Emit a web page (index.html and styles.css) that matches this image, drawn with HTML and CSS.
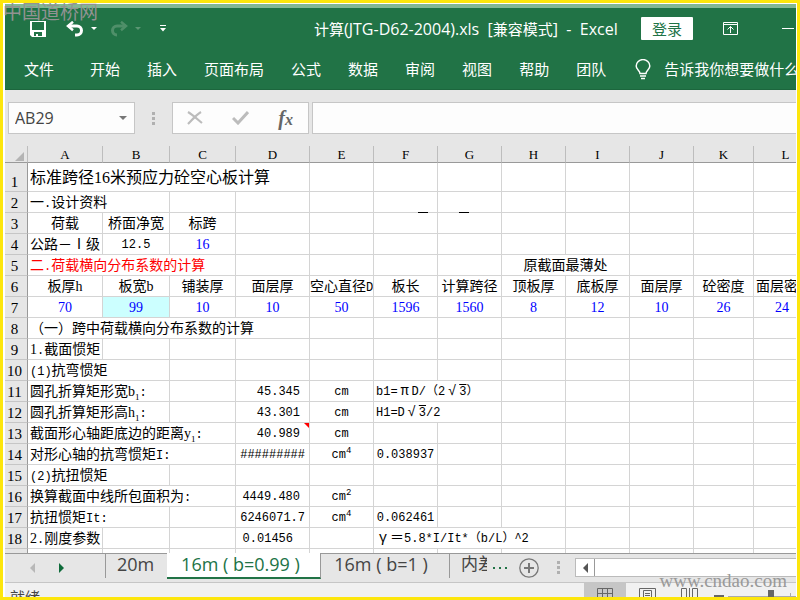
FILE: index.html
```html
<!DOCTYPE html>
<html lang="zh-CN">
<head>
<meta charset="utf-8">
<title>计算(JTG-D62-2004).xls - Excel</title>
<link rel="stylesheet" href="styles.css">
</head>
<body>
<div class="frame">
<div class="window">
  <header class="ribbon">
    <div class="titlebar">
      <div class="quick">
        <button class="icon-btn" aria-label="保存"><svg width="16" height="16" viewBox="0 0 16 16"><path fill="#fff" fill-rule="evenodd" d="M0 0h16v16H2l-2-2zM2 1v8h12V1zM4 11v4h2v-2h2v2h4v-4z"/></svg></button>
        <button class="icon-btn undo" aria-label="撤消"><svg width="18" height="16" viewBox="0 0 18 16"><path fill="none" stroke="#fff" stroke-width="3" d="M2.500 5H11a4.500 4.500 0 0 1 0 9H9"/><path fill="none" stroke="#fff" stroke-width="2.500" d="M7 .8 2 5l5 4.200"/></svg></button>
        <button class="icon-btn caret" aria-label="撤消列表"><svg width="6" height="3" viewBox="0 0 6 3"><path fill="#fff" d="M0 0h6L3 3z"/></svg></button>
        <button class="icon-btn redo" aria-label="恢复"><svg width="18" height="16" viewBox="0 0 18 16"><path fill="none" stroke="#4f8f69" stroke-width="3" d="M15.500 5H7a4.500 4.500 0 0 0 0 9"/><path fill="none" stroke="#4f8f69" stroke-width="2.500" d="m11 .8 5 4.200-5 4.200"/></svg></button>
        <button class="icon-btn caret" aria-label="恢复列表"><svg width="6" height="3" viewBox="0 0 6 3"><path fill="#5b9673" d="M0 0h6L3 3z"/></svg></button>
        <button class="icon-btn custom" aria-label="自定义快速访问工具栏"><svg width="6" height="7" viewBox="0 0 6 7"><path fill="#fff" d="M0 0h6v1H0zM0 3h6L3 6.500z"/></svg></button>
      </div>
      <h1 class="title"><span>计算</span>(JTG-D62-2004).xls&nbsp; [<span>兼容模式</span>]&nbsp; -&nbsp; Excel</h1>
      <button class="login">登录</button>
      <button class="icon-btn display" aria-label="功能区显示选项"><svg width="15" height="13" viewBox="0 0 15 13"><path fill="none" stroke="#fff" d="M.5 .5h14v12H.5zM0 2.500h15M7.500 11V4.500M4.500 7.500l3-3 3 3"/></svg></button>
      <button class="icon-btn minimize" aria-label="最小化"><svg width="12" height="12" viewBox="0 0 12 12"><path fill="#fff" d="M0 5h12v1H0z"/></svg></button>
    </div>
    <nav class="menu">
      <a href="#" class="file">文件</a><a href="#">开始</a><a href="#">插入</a><a href="#">页面布局</a><a href="#">公式</a><a href="#">数据</a><a href="#">审阅</a><a href="#">视图</a><a href="#">帮助</a><a href="#">团队</a>
      <a href="#" class="tell"><svg width="16" height="21" viewBox="0 0 16 21"><path fill="none" stroke="#fff" stroke-width="1.500" d="M5 14.500c0-3-3.800-3.500-3.800-7.500a6.700 6.300 0 0 1 13.600 0c0 4-3.800 4.500-3.800 7.500zM5 17h6M6 19.500h4"/></svg>告诉我你想要做什么</a>
    </nav>
  </header>

  <div class="formula-row">
    <div class="box name-box"><input aria-label="名称框" value="AB29"><svg width="8" height="4" viewBox="0 0 8 4"><path fill="#777" d="M0 0h8L4 4z"/></svg></div>
    <span class="dots"><i></i><i></i><i></i></span>
    <div class="box actions">
      <button class="icon-btn" aria-label="取消"><svg width="16" height="14" viewBox="0 0 16 14"><path fill="none" stroke="#bcbcbc" stroke-width="2.200" d="M1 1c5 3 9 7 14 11M14 1C9 4 6 8 1 13"/></svg></button>
      <button class="icon-btn" aria-label="输入"><svg width="17" height="14" viewBox="0 0 17 14"><path fill="none" stroke="#bcbcbc" stroke-width="3" d="M1 7l5 5L16 1"/></svg></button>
      <button class="icon-btn fx" aria-label="插入函数">f<small>x</small></button>
    </div>
    <div class="box formula"><input aria-label="编辑栏"></div>
  </div>

  <main class="sheet">
    <table>
      <colgroup><col class="c-head"><col class="c-a"><col class="c-b"><col class="c-c"><col class="c-d"><col class="c-std" span="6"><col class="c-k"><col class="c-std"></colgroup>
      <thead><tr><th class="corner"><svg width="9" height="9" viewBox="0 0 9 9"><path fill="#b4b4b4" d="M9 0v9H0z"/></svg></th><th>A</th><th>B</th><th>C</th><th>D</th><th>E</th><th>F</th><th>G</th><th>H</th><th>I</th><th>J</th><th>K</th><th>L</th></tr></thead>
      <tbody>
      <tr class="tall"><th>1</th><td class="l" colspan="4">标准跨径16米预应力砼空心板计算</td><td></td><td></td><td></td><td></td><td></td><td></td><td></td><td></td></tr>
      <tr><th>2</th><td class="l" colspan="2">一<span class="num">.</span>设计资料</td><td></td><td></td><td></td><td class="bar bar-f"></td><td class="bar bar-g"></td><td></td><td></td><td></td><td></td><td></td></tr>
      <tr><th>3</th><td>荷载</td><td>桥面净宽</td><td>标跨</td><td></td><td></td><td></td><td></td><td></td><td></td><td></td><td></td><td></td></tr>
      <tr><th>4</th><td class="l">公路－Ⅰ级</td><td class="num">12.5</td><td class="blue">16</td><td></td><td></td><td></td><td></td><td></td><td></td><td></td><td></td><td></td></tr>
      <tr><th>5</th><td class="l red" colspan="3">二<span class="num">.</span>荷载横向分布系数的计算</td><td></td><td></td><td></td><td></td><td colspan="2">原截面最薄处</td><td></td><td></td><td></td></tr>
      <tr><th>6</th><td>板厚h</td><td>板宽b</td><td>铺装厚</td><td>面层厚</td><td>空心直径<span class="num">D</span></td><td>板长</td><td>计算跨径</td><td>顶板厚</td><td>底板厚</td><td>面层厚</td><td>砼密度</td><td class="l">面层密度</td></tr>
      <tr class="blue"><th>7</th><td>70</td><td class="cyan">99</td><td>10</td><td>10</td><td>50</td><td>1596</td><td>1560</td><td>8</td><td>12</td><td>10</td><td>26</td><td class="last">24</td></tr>
      <tr><th>8</th><td class="l" colspan="4">（一）跨中荷载横向分布系数的计算</td><td></td><td></td><td></td><td></td><td></td><td></td><td></td><td></td></tr>
      <tr><th>9</th><td class="l">1<span class="num">.</span>截面惯矩</td><td></td><td></td><td></td><td></td><td></td><td></td><td></td><td></td><td></td><td></td><td></td></tr>
      <tr><th>10</th><td class="l" colspan="2"><span class="num">(1)</span>抗弯惯矩</td><td></td><td></td><td></td><td></td><td></td><td></td><td></td><td></td><td></td><td></td></tr>
      <tr><th>11</th><td class="l" colspan="2">圆孔折算矩形宽b<sub>1</sub><span class="num">:</span></td><td></td><td class="r num">45.345</td><td class="num">cm</td><td class="l num" colspan="2">b1=<span class="full-width">π</span>D/（2<span class="full-width">√</span><span class="root">3</span>）</td><td></td><td></td><td></td><td></td><td></td></tr>
      <tr><th>12</th><td class="l" colspan="2">圆孔折算矩形高h<sub>1</sub><span class="num">:</span></td><td></td><td class="r num">43.301</td><td class="num">cm</td><td class="l num" colspan="2">H1=D<span class="full-width">√</span><span class="root">3</span>/2</td><td></td><td></td><td></td><td></td><td></td></tr>
      <tr><th>13</th><td class="l" colspan="3">截面形心轴距底边的距离y<sub>1</sub><span class="num">:</span></td><td class="r num note">40.989</td><td class="num">cm</td><td></td><td></td><td></td><td></td><td></td><td></td><td></td></tr>
      <tr><th>14</th><td class="l" colspan="3">对形心轴的抗弯惯矩<span class="num">I:</span></td><td class="r full num">#########</td><td class="num">cm<sup>4</sup></td><td class="num">0.038937</td><td></td><td></td><td></td><td></td><td></td><td></td></tr>
      <tr><th>15</th><td class="l" colspan="2"><span class="num">(2)</span>抗扭惯矩</td><td></td><td></td><td></td><td></td><td></td><td></td><td></td><td></td><td></td><td></td></tr>
      <tr><th>16</th><td class="l" colspan="3">换算截面中线所包面积为<span class="num">:</span></td><td class="r num">4449.480</td><td class="num">cm<sup>2</sup></td><td></td><td></td><td></td><td></td><td></td><td></td><td></td></tr>
      <tr><th>17</th><td class="l" colspan="2">抗扭惯矩<span class="num">It:</span></td><td></td><td class="r full num">6246071.7</td><td class="num">cm<sup>4</sup></td><td class="num">0.062461</td><td></td><td></td><td></td><td></td><td></td><td></td></tr>
      <tr><th>18</th><td class="l">2<span class="num">.</span>刚度参数</td><td></td><td></td><td class="r wide num">0.01456</td><td></td><td class="l num" colspan="3"><span class="full-width">γ</span><span class="full-width">＝</span>5.8*I/It*（b/L）^2</td><td></td><td></td><td></td><td></td></tr>
      <tr><th></th><td></td><td></td><td></td><td></td><td></td><td></td><td></td><td></td><td></td><td></td><td></td><td></td></tr>
      </tbody>
    </table>
  </main>

  <div class="tabs">
    <div class="tab-nav">
      <button class="icon-btn" aria-label="上一张"><svg width="5" height="10" viewBox="0 0 5 10"><path fill="#b8b8b8" d="M5 0v10L0 5z"/></svg></button>
      <button class="icon-btn" aria-label="下一张"><svg width="5" height="10" viewBox="0 0 5 10"><path fill="#0e6b3a" d="M0 0v10l5-5z"/></svg></button>
    </div>
    <button class="tab first">20m</button>
    <button class="tab active">16m ( b=0.99 )</button>
    <button class="tab third">16m ( b=1 )</button>
    <button class="tab cut"><span>内差</span></button>
    <button class="more" aria-label="更多工作表"><i></i><i></i><i></i></button>
    <button class="icon-btn add" aria-label="新工作表"><svg width="20" height="20" viewBox="0 0 20 20"><circle cx="10" cy="10" r="9.200" fill="none" stroke="#777" stroke-width="1.300"/><path stroke="#777" stroke-width="2" d="M5 10h10M10 5v10"/></svg></button>
    <span class="dots"><i></i><i></i><i></i></span>
    <div class="scroll"><button class="icon-btn" aria-label="向左滚动"><svg width="5" height="10" viewBox="0 0 5 10"><path fill="#555" d="M5 0v10L0 5z"/></svg></button></div>
  </div>

  <footer class="status">
    <span class="ready">就绪</span>
    <button class="view on" aria-label="普通"><svg width="16" height="16" viewBox="0 0 16 16"><path fill="none" stroke="#666" d="M.5 .5h15v15H.5zM0 5.500h16M0 10.500h16M5.500 0v16M10.500 0v16"/></svg></button>
    <button class="view" aria-label="页面布局"><svg width="17" height="16" viewBox="0 0 17 16"><path fill="none" stroke="#666" d="M.5 .5h16v15H.5zM4.500 15V2.500h8V15M6 5.500h5M6 7.500h5M6 9.500h5"/></svg></button>
    <button class="view" aria-label="分页预览"><svg width="17" height="16" viewBox="0 0 17 16"><path fill="none" stroke="#666" d="M.5 15V.5h5V12M16.500 15V.5h-5V12M8.500 0v12"/></svg></button>
    <svg class="zoom-bar" width="82" height="15" viewBox="0 0 82 15"><path fill="#666" d="M0 7h10v2H0zM54 2h6v13h-6z"/><path fill="#aaa" d="M14 8h40v1H14zM60 8h22v1H60zM76 5h1v4h-1z"/></svg>
  </footer>
</div>
<div class="mark mark-top">中国道桥网</div>
<div class="mark mark-bottom">www.cndao.com</div>
</div>
</body>
</html>
```
FILE: styles.css
```css
* { box-sizing: border-box; }
body { margin: 0; font-family: "Open Sans", "Noto Sans CJK SC", sans-serif; }
button, input { font: inherit; margin: 0; padding: 0; border: 0; background: none; color: inherit; }
svg { display: block; flex: none; }

.frame {
  position: relative;
  height: 100vh;
  padding: 1px 1px 0 2px;
  border: 3px solid #fde60c;
  background: #fff;
  overflow: hidden;
}
.window { display: flex; flex-direction: column; height: 100%; overflow: hidden; background: #e6e6e6; }

.ribbon { flex: none; color: #fff; background: #217346; border-top: 4px solid #82b795; border-bottom: 1px solid #1c663d; }
.titlebar { display: flex; align-items: center; height: 41px; }
.icon-btn { display: flex; align-items: center; justify-content: center; flex: none; }
.quick { display: flex; align-items: center; width: 309px; padding-left: 25px; flex: none; }
.undo { margin-left: 20px; }
.caret { margin-left: 7px; }
.redo { margin-left: 13px; }
.custom { margin-left: 19px; }
.title { width: 327px; flex: none; margin: 0; font-size: 16px; line-height: 24px; font-weight: 400; white-space: nowrap; }
.title span { font-size: 15px; }
.login { width: 52px; height: 23px; flex: none; background: #fff; color: #217346; font-size: 15px; line-height: 22px; border-radius: 1px; }
.display { margin-left: 30px; }
.minimize { margin-left: 44px; }
.menu { display: flex; align-items: center; gap: 27px; height: 40px; padding: 0 0 0 19px; }
.menu a { flex: none; color: #fff; text-decoration: none; font-size: 15px; line-height: 24px; white-space: nowrap; }
.menu .file { margin-right: 9px; }
.menu .tell { display: flex; align-items: center; gap: 13px; margin-left: 2px; }

.formula-row { display: flex; align-items: center; flex: none; height: 56px; padding-left: 3px; }
.box { display: flex; align-items: center; height: 32px; background: #fdfdfd; border: 1px solid #c6c6c6; }
.box input { min-width: 0; width: 100%; height: 28px; outline: 0; }
.name-box { width: 127px; padding: 0 7px 0 6px; color: #444; font-size: 16px; }
.dots { display: flex; flex-direction: column; gap: 2px; flex: none; }
.dots i { width: 3px; height: 3px; background: #b0b0b0; }
.formula-row .dots { margin: 0 17px; }
.actions { width: 137px; padding: 0 15px 0 14px; justify-content: space-between; }
.fx { color: #666; font: italic 700 20px/28px "Liberation Serif", serif; }
.fx small { font-size: 16px; align-self: flex-end; line-height: 24px; }
.formula { flex: 1; margin-left: 3px; border-right: 0; }

.sheet { flex: 1; min-height: 0; overflow: hidden; background: #fff; font-family: "Liberation Serif", "Noto Sans CJK SC", serif; }
table { width: 807px; table-layout: fixed; border-collapse: separate; border-spacing: 0; font-size: 14px; line-height: 18px; color: #000; }
.c-head { width: 23px; }
.c-a { width: 75px; }
.c-b { width: 67px; }
.c-c { width: 66px; }
.c-d { width: 74px; }
.c-std { width: 64px; }
.c-k { width: 60px; }
th, td { height: 21px; padding: 2px 0 0; white-space: nowrap; overflow: hidden; font-weight: 400; text-align: center; border: solid #d4d4d4; border-width: 0 1px 1px 0; }
th { background: #e6e6e6; border-color: #c6c6c6; }
thead th { height: 17px; padding-top: 2px; line-height: 14px; font-size: 13px; border-color: #bdbdbd #bdbdbd #999; }
.corner svg { margin: 2px 0 0 10px; }
tbody th { border-right-color: #999; font-size: 15px; vertical-align: bottom; }
tr > th:first-child { padding-right: 3px; }
.tall td, .tall th { height: 29px; }
.tall td { font-size: 16px; line-height: 24px; }
td.l { text-align: left; padding-left: 2px; }
td.r { text-align: right; padding-right: 9px; }
td.full { padding-right: 4px; }
td.wide { padding-right: 16px; }
td.last { padding-right: 7px; }
.num { font-family: "Liberation Mono", "Noto Sans CJK SC", monospace; font-size: 12px; }
td span { line-height: 0; }
.full-width { display: inline-block; width: 14px; font-size: 14px; text-align: center; }
.blue td, td.blue { color: #00f; }
tbody tr td.red { color: #f00; }
.cyan { background: #cff; }
sub, sup { font-size: 9px; line-height: 0; }
.root { text-decoration: overline; }
.bar, .note { position: relative; overflow: visible; }
.bar::after { content: ""; position: absolute; bottom: -1px; width: 10px; height: 1px; background: #000; }
.bar-f::after { left: 44px; }
.bar-g::after { left: 21px; }
.note::after { content: ""; position: absolute; top: 0; right: 0; border: solid transparent; border-width: 0 0 5px 5px; border-top: 5px solid #f00; border-bottom: 0; }

.tabs { display: flex; flex: none; height: 30px; align-items: stretch; color: #444; font-size: 18px; line-height: 20px; border-bottom: 1px solid #c6c6c6; box-shadow: inset 0 1px #999; }
.tab-nav { display: flex; align-items: center; width: 100px; padding-left: 25px; gap: 24px; flex: none; }
.tab { flex: none; padding: 0 0 4px; height: 25px; white-space: nowrap; }
.tab.first { width: 62px; padding-right: 2px; }
.tab.active { width: 154px; height: 26px; padding: 0 6px 3px 0; color: #217346; background: #fff; border-bottom: 2px solid #217346; border-right: 1px solid #999; }
.tab.third { width: 128px; padding-right: 8px; }
.tab.first, .tab.cut { border-left: 1px solid #999; }
.tab.cut { width: 38px; padding-left: 11px; font-size: 17px; }
.tab.cut span { display: block; overflow: hidden; }
.more { display: flex; align-items: center; gap: 4px; margin-left: 6px; }
.more i { width: 2px; height: 2px; background: #217346; }
.add { margin-left: 12px; }
.tabs .dots { align-self: center; margin-left: 18px; }
.scroll { flex: 1; align-self: center; height: 19px; margin-left: 15px; background: #fff; border: 1px solid #bbb; border-right: 0; }
.scroll .icon-btn { width: 19px; height: 17px; border-right: 1px solid #999; }

.status { display: flex; flex: none; height: 14px; overflow: hidden; background: #f1f1f1; color: #444; font-size: 15px; }
.ready { flex: 1; padding: 4px 0 0 5px; line-height: 20px; }
.view { width: 42px; height: 20px; padding: 5px 0 0 13px; flex: none; }
.view.on { background: #c6c6c6; }
.zoom-bar { margin: 5px 0 0 4px; }

.mark { position: absolute; pointer-events: none; white-space: nowrap; color: #929292; }
.mark-top { left: 0; top: -2px; font: 19px/24px "Liberation Serif", "Noto Sans CJK SC", serif; }
.mark-bottom { right: 10px; bottom: 4px; font: 19px/24px "Liberation Serif", serif; color: #999; }
```
